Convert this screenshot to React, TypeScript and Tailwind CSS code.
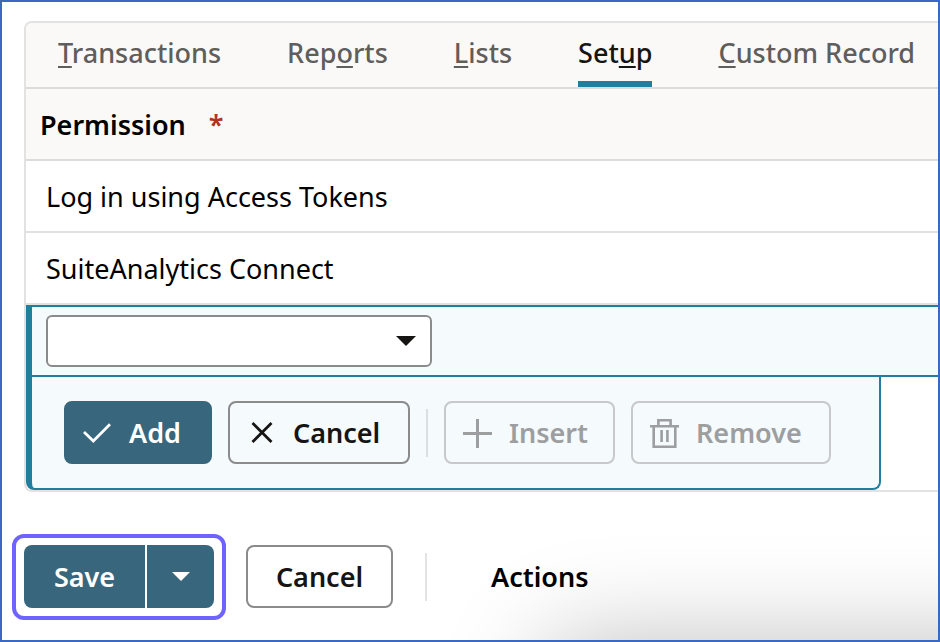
import { useState } from "react";
import type { ReactNode } from "react";

const tabs = [
    { id: "transactions", before: "", key: "T", after: "ransactions" },
    { id: "reports", before: "Rep", key: "o", after: "rts" },
    { id: "lists", before: "", key: "L", after: "ists" },
    { id: "setup", before: "Set", key: "u", after: "p" },
    { id: "custom", before: "", key: "C", after: "ustom Record" },
];

const permissions = ["Log in using Access Tokens", "SuiteAnalytics Connect"];

function CheckIcon() {
    return (
        <svg width="28" height="20" viewBox="0 0 28 20" fill="none" stroke="currentColor" strokeWidth="2.7" aria-hidden="true">
            <path d="M1 9 10.3 18 27 1.2" />
        </svg>
    );
}

function CloseIcon() {
    return (
        <svg width="22" height="22" viewBox="0 0 22 22" fill="none" stroke="currentColor" strokeWidth="2.8" aria-hidden="true">
            <path d="M1.5 1 20.5 20M20.5 1 1.5 20" />
        </svg>
    );
}

function PlusIcon() {
    return (
        <svg width="29" height="29" viewBox="0 0 29 29" fill="none" stroke="currentColor" strokeWidth="3" aria-hidden="true">
            <path d="M14.5 0V29M0 14.5H29" />
        </svg>
    );
}

function TrashIcon() {
    return (
        <svg width="29" height="29" viewBox="0 0 29 29" fill="none" stroke="currentColor" strokeWidth="2.6" aria-hidden="true">
            <path d="M0 7.2H29M8.4 7.2V1.3H20.6V7.2M3.7 7.2V27.7H25.3V7.2M11.6 11V23M17.4 11V23" />
        </svg>
    );
}

function Caret({ className }: { className: string }) {
    return (
        <svg viewBox="0 0 20 10" preserveAspectRatio="none" fill="currentColor" className={className} aria-hidden="true">
            <path d="M0 0H20L10 10Z" />
        </svg>
    );
}

function ActionButton({ className, disabled, children }: { className: string; disabled?: boolean; children: ReactNode }) {
    return (
        <button type="button" disabled={disabled} className={`flex h-[63px] items-center rounded-lg border-2 pt-px font-semibold ${className}`}>
            {children}
        </button>
    );
}

export default function App() {
    const [active, setActive] = useState("setup");

    return (
        <div className="relative min-h-screen overflow-hidden border-2 border-[#3a69c4] bg-white pt-[19px] font-['Noto_Sans',sans-serif] text-[27px] leading-9 text-[#161513]">
            <div className="absolute -right-40 -bottom-40 left-[540px] h-40 rounded-tl-[40px] shadow-[0_0_100px_rgba(0,0,0,0.25)]" />

            <section className="relative ml-[22px] rounded-l-lg border-2 border-r-0 border-[#e2e2e2] bg-white">
                <div role="tablist" className="flex gap-[66px] overflow-hidden rounded-tl-md border-b-2 border-[#dcdcdc] bg-[#faf9f7] pl-8">
                    {tabs.map((tab) => (
                        <button
                            key={tab.id}
                            type="button"
                            role="tab"
                            aria-selected={active === tab.id}
                            onClick={() => setActive(tab.id)}
                            className={`h-16 border-b-6 pt-0.5 font-medium whitespace-nowrap ${
                                active === tab.id ? "border-[#227e9e] text-[#161513]" : "border-transparent text-[#5f5e5c]"
                            }`}
                        >
                            {tab.before}
                            <span className="underline decoration-2 underline-offset-3 [text-decoration-skip-ink:none]">{tab.key}</span>
                            {tab.after}
                        </button>
                    ))}
                </div>

                <table className="w-full border-separate border-spacing-0 text-left text-black">
                    <thead>
                        <tr>
                            <th scope="col" className="h-18 border-b-2 border-[#dcdcdc] bg-[#faf9f7] pt-0.5 pl-3.5 font-semibold">
                                Permission <span className="ml-4 text-[#b3311f]">*</span>
                            </th>
                        </tr>
                    </thead>
                    <tbody>
                        {permissions.map((name) => (
                            <tr key={name}>
                                <td className="h-18 border-b-2 border-[#e2e2e2] pt-0.5 pl-5">{name}</td>
                            </tr>
                        ))}
                        <tr>
                            <td className="border-y-2 border-l-6 border-[#227e9e] bg-[#f5fafd] py-2 pl-3.5">
                                <div className="relative w-[386px]">
                                    <select aria-label="Permission" className="block h-[52px] w-full appearance-none rounded-md border-2 border-[#8b8b8b] bg-white px-3">
                                        <option value=""></option>
                                        {permissions.map((name) => (
                                            <option key={name}>{name}</option>
                                        ))}
                                    </select>
                                    <Caret className="pointer-events-none absolute top-[21px] right-4 h-2.5 w-5 text-[#161513]" />
                                </div>
                            </td>
                        </tr>
                    </tbody>
                </table>

                <div className="flex w-fit items-center gap-4 rounded-b-lg border-r-2 border-b-2 border-l-6 border-[#227e9e] bg-[#f5fafd] py-6 pr-12 pl-8">
                    <ActionButton className="w-[148px] gap-[18px] border-[#38677d] bg-[#38677d] pl-[17px] text-white">
                        <CheckIcon />
                        Add
                    </ActionButton>
                    <ActionButton className="w-[182px] gap-5 border-[#8b8b8b] pl-[21px]">
                        <CloseIcon />
                        Cancel
                    </ActionButton>
                    <div className="h-12 w-0.5 bg-[#dcdfe0]" />
                    <ActionButton disabled className="w-[171px] gap-[17px] border-[#c6c8c9] pl-[17px] text-[#9c9e9f]">
                        <PlusIcon />
                        Insert
                    </ActionButton>
                    <ActionButton disabled className="w-[200px] gap-[17px] border-[#c6c8c9] pl-[17px] text-[#9c9e9f]">
                        <TrashIcon />
                        Remove
                    </ActionButton>
                </div>
            </section>

            <div className="relative mt-[42px] ml-2.5 flex items-center">
                <div className="flex gap-0.5 rounded-xl border-4 border-[#6f63ff] px-2 pt-[7px] pb-2 text-white">
                    <button type="button" className="h-[63px] w-[121px] rounded-l-lg bg-[#38677d] font-semibold">
                        Save
                    </button>
                    <button type="button" aria-label="More save options" className="flex h-[63px] w-[67px] items-center justify-center rounded-r-lg bg-[#38677d]">
                        <Caret className="h-[9px] w-[18px]" />
                    </button>
                </div>
                <div className="flex items-center pb-px">
                    <ActionButton className="ml-5 w-[147px] justify-center border-[#8b8b8b] bg-white">Cancel</ActionButton>
                    <div className="ml-8 h-12 w-0.5 bg-[#e2e2e2]" />
                    <button type="button" className="ml-16 pt-px font-semibold text-black">
                        Actions
                    </button>
                </div>
            </div>
        </div>
    );
}
